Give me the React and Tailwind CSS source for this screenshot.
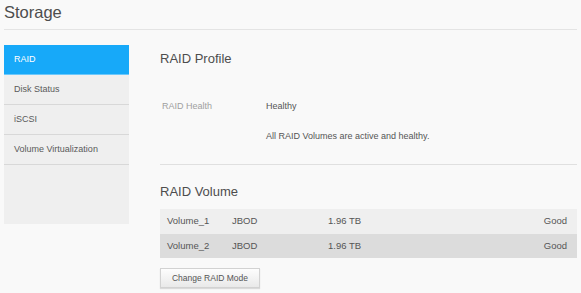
import React from 'react';

const menu = ['RAID', 'Disk Status', 'iSCSI', 'Volume Virtualization'];

const volumes = [
  { name: 'Volume_1', mode: 'JBOD', size: '1.96 TB', status: 'Good' },
  { name: 'Volume_2', mode: 'JBOD', size: '1.96 TB', status: 'Good' },
];

export default function App() {
  return (
    <div className="w-[581px] h-[293px] overflow-hidden bg-[#f9f9f9] text-[#555] font-['Liberation_Sans',Arial,sans-serif]">
      {/* header */}
      <div className="mx-[4px] h-[30px] border-b border-[#e4e4e4] pt-[2px] text-[16.5px] leading-[20px] text-[#4d4d4d]">
        Storage
      </div>

      <div className="flex pl-[4px] mt-[15px]">
        {/* sidebar */}
        <div className="w-[125px] h-[179px] bg-[#efefef] shrink-0">
          {menu.map((item, i) => (
            <div
              key={item}
              className={
                i === 0
                  ? 'h-[30px] flex items-center pl-[10px] pt-[1px] text-[9px] bg-[#17a9f9] text-white border-b border-[#6cc8fb]'
                  : 'h-[30px] flex items-center pl-[10px] pt-[1px] text-[9px] text-[#5a5a5a] border-b border-[#d8d8d8]'
              }
            >
              {item}
            </div>
          ))}
        </div>

        {/* main */}
        <div className="ml-[31px] w-[417px]">
          <div className="mt-[6px] text-[13px] leading-[16px] text-[#4d4d4d]">RAID Profile</div>

          <div className="mt-[32px] flex text-[9px] leading-[14px]">
            <div className="w-[106px] pl-[2px] text-[#a0a0a0]">RAID Health</div>
            <div className="text-[#555]">Healthy</div>
          </div>
          <div className="mt-[16px] pl-[106px] text-[9px] leading-[14px] text-[#555]">
            All RAID Volumes are active and healthy.
          </div>

          <div className="mt-[21px] border-t border-[#e0e0e0]" />

          <div className="mt-[19px] text-[13px] leading-[16px] text-[#4d4d4d]">RAID Volume</div>

          <div className="mt-[9px] text-[9.5px] text-[#555]">
            {volumes.map((v, i) => (
              <div
                key={v.name}
                className={
                  i === 0
                    ? 'h-[25px] flex items-center pl-[7px] pr-[10px] bg-[#efefef]'
                    : 'h-[24px] flex items-center pl-[7px] pr-[10px] bg-[#dcdcdc]'
                }
              >
                <div className="w-[65px]">{v.name}</div>
                <div className="w-[96px]">{v.mode}</div>
                <div className="flex-1">{v.size}</div>
                <div>{v.status}</div>
              </div>
            ))}
          </div>

          <button className="mt-[10px] w-[100px] h-[20px] border border-[#d2d2d2] bg-gradient-to-b from-[#fdfdfd] to-[#e9e9e9] text-[8.5px] text-[#555] shadow-[0_1px_1px_rgba(0,0,0,0.12)]">
            Change RAID Mode
          </button>
        </div>
      </div>
    </div>
  );
}
